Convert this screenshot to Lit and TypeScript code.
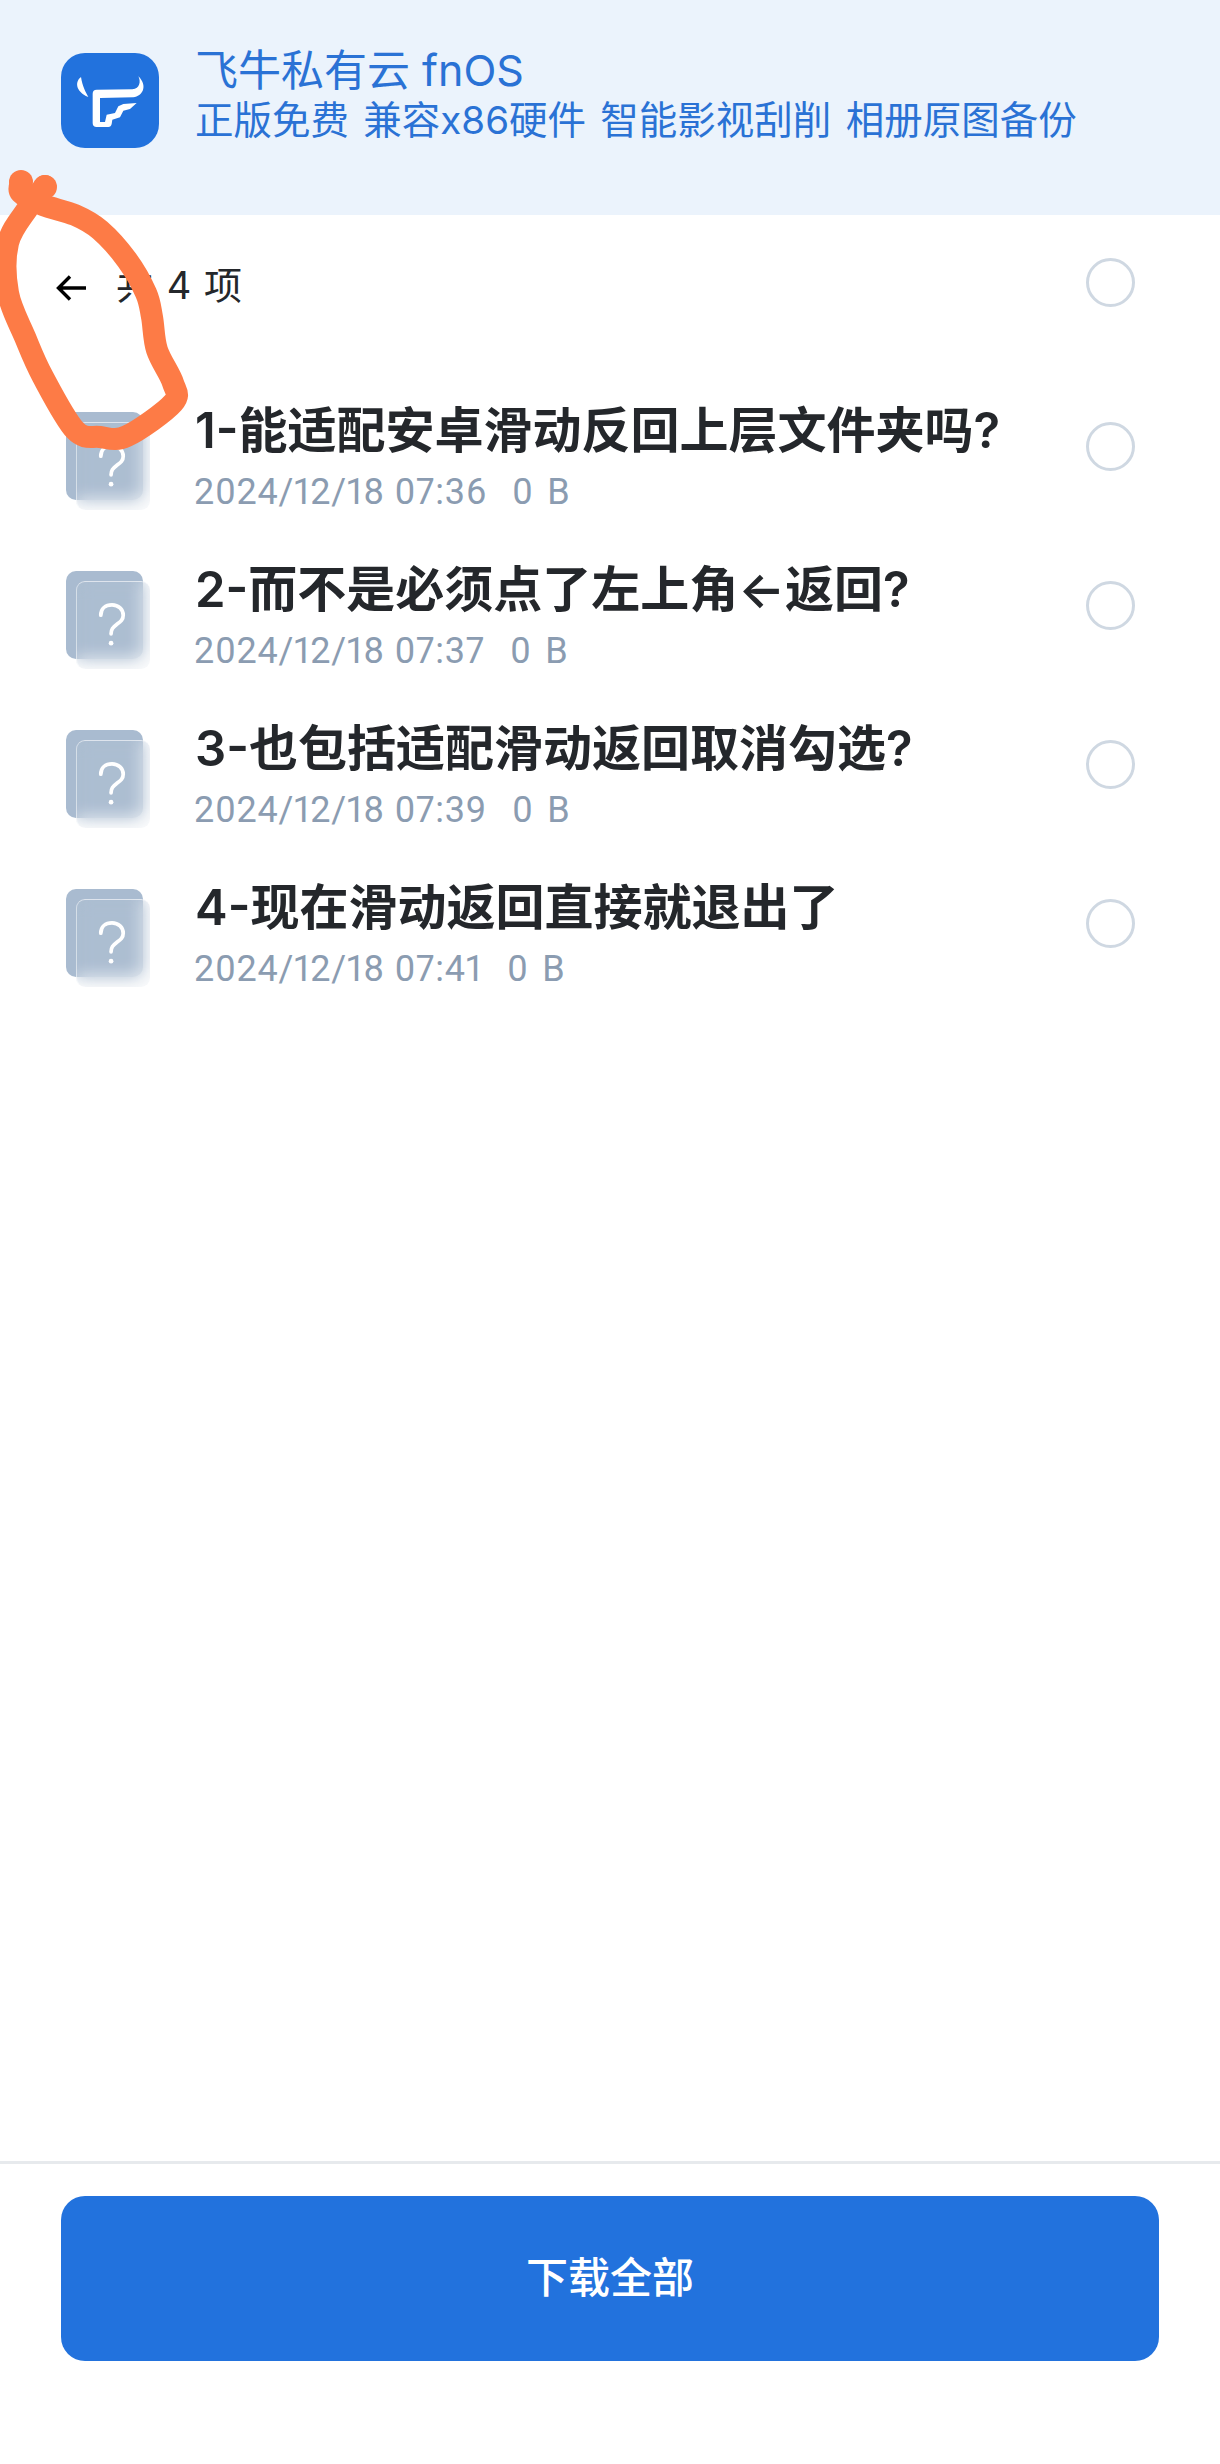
import { LitElement, html, css, svg } from "lit";
import { customElement } from "lit/decorators.js";

const FILES = [
  { name: "1-能适配安卓滑动反回上层文件夹吗?", time: "2024/12/18 07:36", size: "0 B" },
  { name: "2-而不是必须点了左上角←返回?", time: "2024/12/18 07:37", size: "0 B" },
  { name: "3-也包括适配滑动返回取消勾选?", time: "2024/12/18 07:39", size: "0 B" },
  { name: "4-现在滑动返回直接就退出了", time: "2024/12/18 07:41", size: "0 B" },
];

// hand-drawn circle round the back arrow, traced from the screenshot
const SCRIBBLE: [number, number][] = [
  [45, 186], [28, 208], [8, 243], [8, 293], [25, 337], [43, 377], [75, 430], [100, 437],
  [127, 436], [173, 403], [173, 383], [157, 350], [152, 317], [146, 293], [127, 260],
  [100, 230], [75, 215], [43, 205], [21, 193], [21, 182],
];

function smoothPath(pts: [number, number][]) {
  let d = `M${pts[0][0]} ${pts[0][1]}`;
  for (let i = 0; i < pts.length - 1; i++) {
    const p0 = pts[Math.max(i - 1, 0)];
    const p1 = pts[i];
    const p2 = pts[i + 1];
    const p3 = pts[Math.min(i + 2, pts.length - 1)];
    const c1x = p1[0] + (p2[0] - p0[0]) / 6;
    const c1y = p1[1] + (p2[1] - p0[1]) / 6;
    const c2x = p2[0] - (p3[0] - p1[0]) / 6;
    const c2y = p2[1] - (p3[1] - p1[1]) / 6;
    d += ` C${c1x} ${c1y} ${c2x} ${c2y} ${p2[0]} ${p2[1]}`;
  }
  return d;
}

const logo = svg`
  <path fill="#fff" d="M78 87C60 100 60 130 100 147C92 132 82 115 78 87Z" />
  <path fill="#fff" d="M250 85C258 100 255 122 232 124L125 125Q113 125 113 137L113 225Q113 237 125 237L160 237Q168 237 170 228L172 215L195 208L205 188L225 183L245 165L205 168L190 175L180 195L155 200L150 222L135 222L135 150L235 148C262 145 280 115 250 85Z" />
`;

@customElement("app-root")
export class AppRoot extends LitElement {
  static styles = css`
    :host {
      display: block;
      font-family: Inter, "Noto Sans CJK SC", sans-serif;
    }
    .page {
      position: relative;
      display: flex;
      flex-direction: column;
      height: 2464px;
      background: #fff;
      overflow: hidden;
    }
    .banner {
      box-sizing: border-box;
      display: flex;
      align-items: center;
      gap: 36px;
      height: 215px;
      padding-left: 61px;
      padding-bottom: 14px;
      background: #ebf3fc;
      color: #2a72d5;
    }
    .logo {
      width: 98px;
      height: 95px;
      border-radius: 24px;
      background: #2272dd;
      flex: none;
    }
    .logo svg {
      display: block;
      width: 100%;
      height: 100%;
    }
    .banner-text {
      margin-bottom: 11px;
    }
    .banner-title {
      font-size: 43px;
      line-height: 50px;
    }
    .banner-sub {
      font-size: 38.5px;
      line-height: 50px;
      word-spacing: 3.5px;
    }
    .header {
      display: flex;
      align-items: center;
      height: 134px;
      padding-left: 53px;
      padding-right: 85px;
      margin-bottom: 18px;
    }
    .back {
      width: 36px;
      height: 36px;
      margin-top: 12px;
      flex: none;
    }
    .count {
      margin-left: 27px;
      margin-top: 1px;
      font-size: 38px;
      letter-spacing: 1px;
      color: #24272b;
      flex: 1;
    }
    .radio {
      box-sizing: border-box;
      width: 49px;
      height: 49px;
      border: 3px solid #cfd8e2;
      border-radius: 50%;
      flex: none;
    }
    .row {
      display: flex;
      align-items: center;
      height: 159px;
      padding-left: 66px;
      padding-right: 85px;
    }
    .file {
      position: relative;
      width: 84px;
      height: 98px;
      margin-right: 44px;
      margin-top: 28px;
      flex: none;
    }
    .sheet-back {
      position: absolute;
      left: 0;
      top: 0;
      width: 77px;
      height: 88px;
      border-radius: 10px;
      background: #a9bbd0;
    }
    .sheet-front {
      position: absolute;
      left: 10px;
      top: 10px;
      width: 74px;
      height: 88px;
      border-radius: 9px;
      background: rgba(210, 218, 230, 0.1);
      backdrop-filter: blur(8px);
      border-top: 1px solid rgba(255, 255, 255, 0.6);
      border-left: 1px solid rgba(255, 255, 255, 0.5);
      box-sizing: border-box;
    }
    .sheet-front svg {
      position: absolute;
      left: 21px;
      top: 21px;
      width: 28px;
      height: 43px;
    }
    .info {
      flex: 1;
      min-width: 0;
      margin-top: 21px;
    }
    .name {
      font-size: 49px;
      line-height: 62px;
      font-weight: 600;
      color: #24272b;
      margin-left: 1px;
    }
    .meta {
      display: flex;
      gap: 25px;
      margin-top: 7px;
      font-family: Roboto, "Noto Sans CJK SC", sans-serif;
      font-variant-numeric: proportional-nums;
      font-size: 36px;
      line-height: 46px;
      letter-spacing: 0.7px;
      color: #8b9cb1;
    }
    .size {
      word-spacing: 4px;
    }
    .footer {
      margin-top: auto;
      height: 303px;
      box-sizing: border-box;
      border-top: 3px solid #e7eaed;
      padding: 32px 61px 0;
    }
    .download {
      box-sizing: border-box;
      display: flex;
      align-items: center;
      justify-content: center;
      height: 165px;
      padding-bottom: 8px;
      border-radius: 24px;
      background: #2272dd;
      color: #fff;
      font-size: 42px;
      font-weight: 500;
    }
    .scribble {
      position: absolute;
      left: 0;
      top: 0;
      width: 200px;
      height: 460px;
      pointer-events: none;
    }
  `;

  private renderFile(f: (typeof FILES)[number]) {
    return html`
      <div class="row">
        <div class="file">
          <div class="sheet-back"></div>
          <div class="sheet-front">
            <svg viewBox="0 0 30 46" fill="none" stroke="#fff" stroke-width="4" stroke-linecap="round">
              <path d="M3 13C3 6 8 2 15 2C22 2 27 7 27 13C27 18 24 20 20 23C16 26 14 28 14 33" />
              <path d="M14 43v.1" stroke-width="5" />
            </svg>
          </div>
        </div>
        <div class="info">
          <div class="name">${f.name}</div>
          <div class="meta"><span>${f.time}</span><span class="size">${f.size}</span></div>
        </div>
        <div class="radio"></div>
      </div>
    `;
  }

  render() {
    return html`
      <div class="page">
        <div class="banner">
          <div class="logo">
            <svg viewBox="18 15 294 285">${logo}</svg>
          </div>
          <div class="banner-text">
            <div class="banner-title">飞牛私有云 fnOS</div>
            <div class="banner-sub">正版免费 兼容x86硬件 智能影视刮削 相册原图备份</div>
          </div>
        </div>
        <div class="header">
          <svg class="back" viewBox="0 0 36 36" fill="none" stroke="#000" stroke-width="3.4">
            <path d="M33 18H6M17 6.5L5.5 18L17 29.5" />
          </svg>
          <div class="count">共 4 项</div>
          <div class="radio"></div>
        </div>
        ${FILES.map((f) => this.renderFile(f))}
        <div class="footer">
          <div class="download">下载全部</div>
        </div>
        <svg class="scribble" viewBox="0 0 200 460" fill="#fd7b46">
          <circle cx="21" cy="182" r="12" />
          <circle cx="45" cy="187" r="12" />
          <path d=${smoothPath(SCRIBBLE)} fill="none" stroke="#fd7b46" stroke-width="22" stroke-linecap="round" stroke-linejoin="round" />
        </svg>
      </div>
    `;
  }
}
